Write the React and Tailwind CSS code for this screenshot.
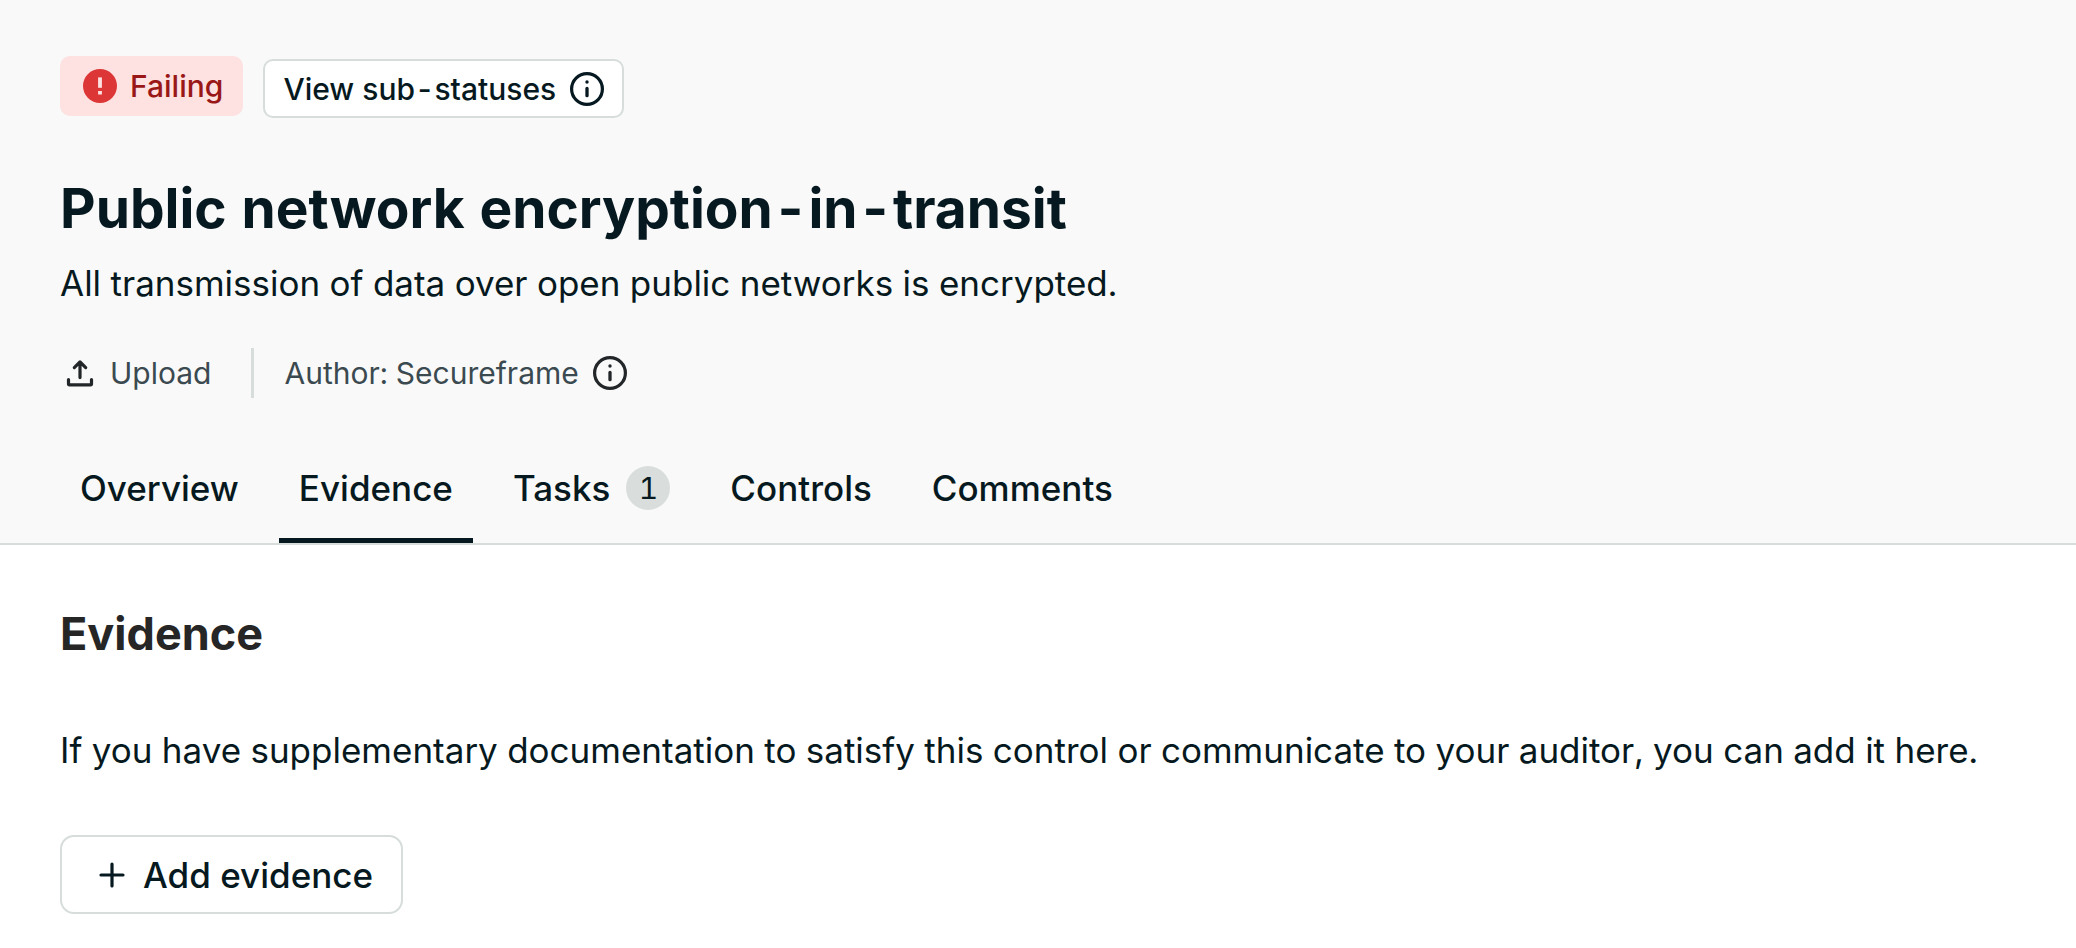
function AlertIcon() {
  return (
    <svg viewBox="0 0 34 34" className="size-[34px]" aria-hidden="true">
      <circle cx="17" cy="17" r="17" fill="#dc3636" />
      <rect x="15.1" y="8.4" width="3.8" height="10.4" fill="#fee1e1" />
      <rect x="15.1" y="22" width="3.8" height="3.5" fill="#fee1e1" />
    </svg>
  );
}

function InfoIcon() {
  return (
    <svg viewBox="0 0 34 34" className="size-[34px]" fill="none" stroke="currentColor" aria-hidden="true">
      <circle cx="17" cy="17" r="15.4" strokeWidth="3.2" />
      <path d="M17 16.5v7.2" strokeWidth="3.3" strokeLinecap="round" />
      <circle cx="17" cy="10" r="1.7" fill="currentColor" stroke="none" />
    </svg>
  );
}

function UploadIcon() {
  return (
    <svg
      viewBox="0 0 28 28"
      className="size-7"
      fill="none"
      stroke="currentColor"
      strokeWidth="3.2"
      strokeLinecap="round"
      strokeLinejoin="round"
      aria-hidden="true"
    >
      <path d="M14 18.6V3M8.3 8.6L14 2.9l5.7 5.7M2.5 20.6v4.2q0 1 1 1h21q1 0 1-1v-4.2" />
    </svg>
  );
}

function PlusIcon() {
  return (
    <svg viewBox="0 0 26 26" className="size-[26px]" stroke="currentColor" strokeWidth="3.2" strokeLinecap="round" aria-hidden="true">
      <path d="M13 2v22M2 13h22" />
    </svg>
  );
}

const tabs = [
  { label: "Overview" },
  { label: "Evidence", active: true },
  { label: "Tasks", count: 1 },
  { label: "Controls" },
  { label: "Comments" },
];

function Tab({ label, count, active }) {
  return (
    <button
      type="button"
      role="tab"
      aria-selected={Boolean(active)}
      className={`flex h-[110px] items-center gap-4 border-y-[5px] border-t-transparent px-5 font-medium ${
        active ? "border-b-[#071920]" : "border-b-transparent"
      }`}
    >
      {label}
      {count && (
        <span className="flex size-11 items-center justify-center rounded-full bg-[#d9dedd] text-[30px] leading-[44px] font-normal">
          {count}
        </span>
      )}
    </button>
  );
}

export default function App() {
  return (
    <div className="min-h-screen bg-white font-['Inter',sans-serif] text-[35px] leading-[52px] text-[#071920] tabular-nums">
      <header className="border-b-2 border-[#d6dddb] bg-[#f9f9f9] px-[60px] pt-14">
        <div className="flex h-[62px] gap-5 text-[30px] leading-[40px]">
          <span className="flex h-[60px] items-center gap-[13px] self-start rounded-[10px] bg-[#fee1e1] pr-5 pl-[23px] font-medium text-[#991717]">
            <AlertIcon />
            Failing
          </span>
          <button
            type="button"
            className="flex h-[59px] items-center gap-3.5 self-end rounded-[10px] border-2 border-[#d6dddb] bg-white px-[18px] font-medium"
          >
            View sub-statuses
            <InfoIcon />
          </button>
        </div>
        <h1 className="mt-[58px] text-[55px] leading-[64px] font-bold">Public network encryption-in-transit</h1>
        <p className="mt-[17px]">All transmission of data over open public networks is encrypted.</p>
        <div className="mt-[39px] flex h-[50px] items-center text-[30px] leading-[50px] text-[#3b4a50]">
          <button type="button" className="flex items-center gap-4 px-1.5">
            <span className="text-[#222629]">
              <UploadIcon />
            </span>
            Upload
          </button>
          <span className="mr-[30px] ml-[34px] h-full w-[3px] bg-[#d6dddb]" />
          <span>Author: Secureframe</span>
          <button type="button" aria-label="About the author" className="ml-3.5 text-[#222629]">
            <InfoIcon />
          </button>
        </div>
        <div role="tablist" className="mt-[35px] flex gap-5">
          {tabs.map((tab) => (
            <Tab key={tab.label} {...tab} />
          ))}
        </div>
      </header>
      <main className="px-[60px] pt-[61px]">
        <h2 className="text-[45px] leading-[56px] font-bold text-[#262626]">Evidence</h2>
        <p className="mt-[62px]">
          If you have supplementary documentation to satisfy this control or communicate to your auditor, you can add it
          here.
        </p>
        <button
          type="button"
          className="mt-[59px] flex h-[79px] items-center gap-[18px] rounded-[14px] border-2 border-[#d6dddb] bg-white pr-7 pl-[37px] font-medium"
        >
          <PlusIcon />
          Add evidence
        </button>
      </main>
    </div>
  );
}
